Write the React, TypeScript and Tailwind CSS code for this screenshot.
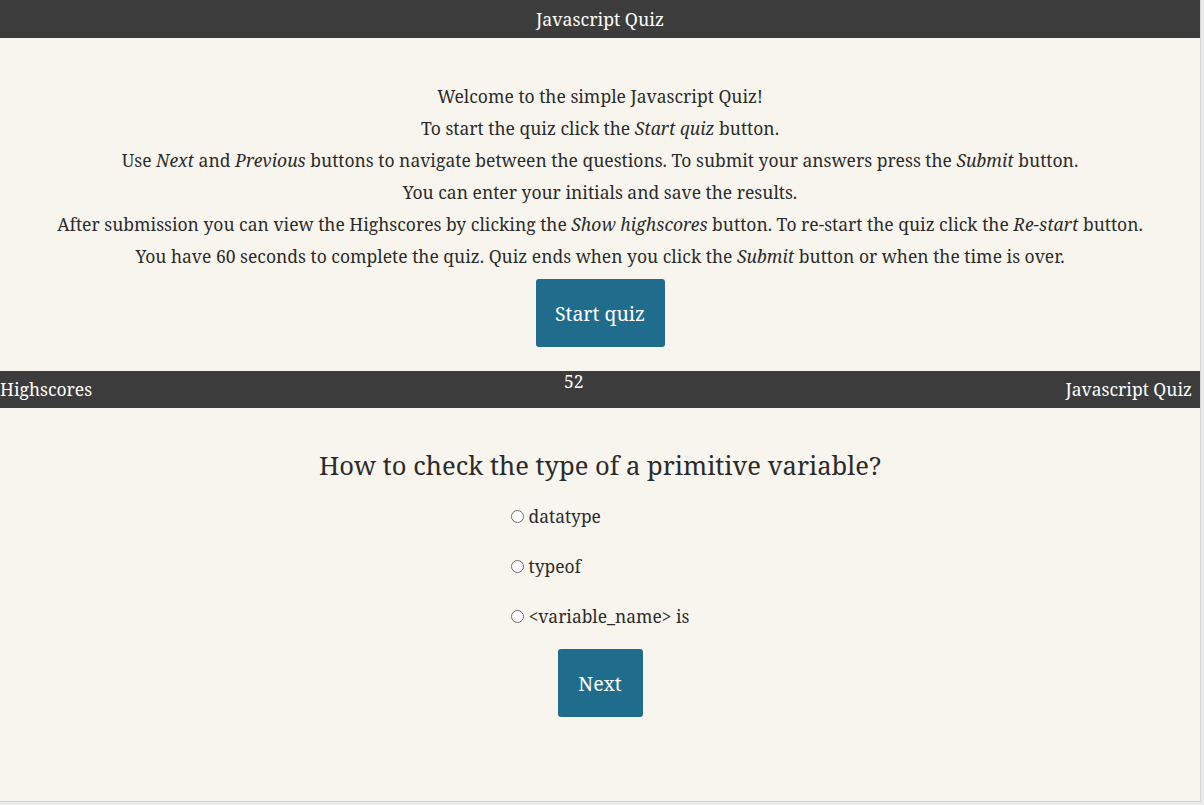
import React from "react";

const serif = { fontFamily: '"Noto Serif", "DejaVu Serif", serif' };

function Radio({ label }: { label: string }) {
  return (
    <div className="flex items-center h-[50px]">
      <span className="inline-block w-[13px] h-[13px] rounded-full border border-[#6b6b6b] bg-white mr-[5px]" />
      <span className="text-[17.4px] text-[#2b2b2b]">{label}</span>
    </div>
  );
}

export default function App() {
  return (
    <div className="w-full h-[805px] bg-[#ebebeb]" style={serif}>
      <div className="w-[1201px] h-[802px] bg-[#f8f5ee] border-r border-b border-[#d4d4d4] flex flex-col">
        <div className="h-[38px] bg-[#3c3c3c] text-white text-[17.7px] flex items-center justify-center">
          Javascript Quiz
        </div>
        <div className="mt-[42px] flex flex-col items-center text-center text-[17.5px] leading-[32px] text-[#2b2b2b]">
          <p>Welcome to the simple Javascript Quiz!</p>
          <p>
            To start the quiz click the <i>Start quiz</i> button.
          </p>
          <p>
            Use <i>Next</i> and <i>Previous</i> buttons to navigate between the questions. To submit your answers press the <i>Submit</i> button.
          </p>
          <p>You can enter your initials and save the results.</p>
          <p>
            After submission you can view the Highscores by clicking the <i>Show highscores</i> button. To re-start the quiz click the <i>Re-start</i> button.
          </p>
          <p>
            You have 60 seconds to complete the quiz. Quiz ends when you click the <i>Submit</i> button or when the time is over.
          </p>
          <button className="mt-[7px] w-[129px] h-[68px] rounded-[3px] bg-[#206c8d] text-white text-[19.5px] pt-[2px]">
            Start quiz
          </button>
        </div>
        <div className="mt-[24px] h-[37px] bg-[#3c3c3c] text-white text-[17.5px] flex justify-between items-center pr-[8px]">
          <span>Highscores</span>
          <span className="self-start leading-[20px] mr-[10px]">52</span>
          <span>Javascript Quiz</span>
        </div>
        <div className="flex flex-col items-center">
          <h2 className="mt-[40px] text-[25.6px] leading-[36px] text-[#2b2b2b]">
            How to check the type of a primitive variable?
          </h2>
          <div className="mt-[7px] flex flex-col items-start">
            <Radio label="datatype" />
            <Radio label="typeof" />
            <Radio label="<variable_name> is" />
          </div>
          <button className="mt-[8px] w-[85px] h-[68px] rounded-[3px] bg-[#206c8d] text-white text-[19.5px] pt-[2px]">
            Next
          </button>
        </div>
      </div>
    </div>
  );
}
